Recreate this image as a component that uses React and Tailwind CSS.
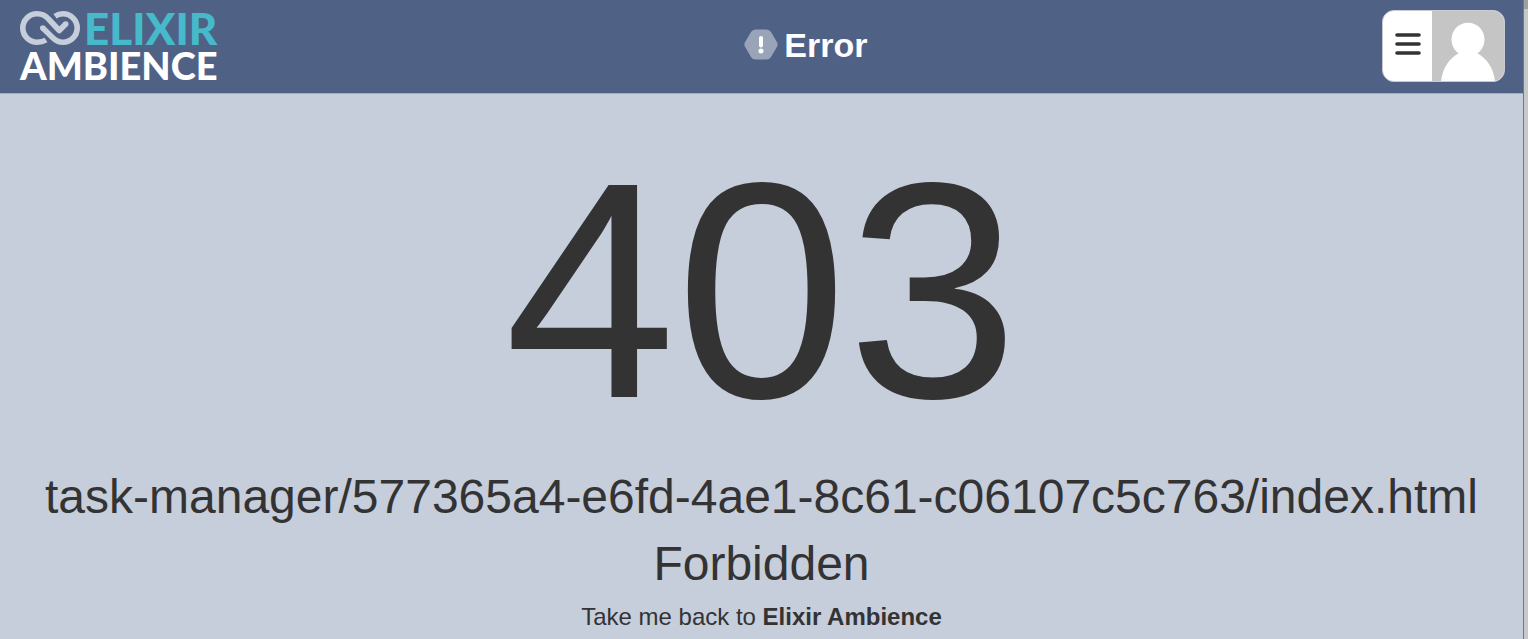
function KnotMark() {
  return (
    <svg viewBox="0 0 60 34" className="h-[34px] w-[60px]" fill="none" stroke="#c6cddb" strokeWidth="5.600" strokeLinejoin="round" aria-hidden="true">
      <path d="M26 29 C23 30.900 19.500 31.200 17 31.200 A14.200 14.200 0 0 1 17 2.800 C22 2.800 25.500 4.500 28.500 8 L39.300 19.500 L45.700 13" />
      <path d="M45.700 13 L45.700 13" strokeLinecap="round" />
      <path d="M22.800 17 L32.500 26.500 C35.500 29.500 39 31.200 43 31.200 A14.200 14.200 0 0 0 43 2.800 C40 2.800 37.500 3.500 35 5.200" />
      <path d="M22.800 17 L22.800 17" strokeLinecap="round" />
    </svg>
  );
}

function AlertHexagon() {
  return (
    <svg viewBox="0 0 34 32" className="h-8 w-[34px]" aria-hidden="true">
      <path d="M11.500 0.500 H22.500 Q25.500 0.500 27 3.100 L33 13.300 Q34.200 15.500 33 17.700 L27 27.900 Q25.500 30.500 22.500 30.500 H11.500 Q8.500 30.500 7 27.900 L1 17.700 Q-0.200 15.500 1 13.300 L7 3.100 Q8.500 0.500 11.500 0.500 Z" fill="#99a4b9" />
      <path d="M17 9 V16.500" stroke="#fff" strokeWidth="4" strokeLinecap="round" />
      <circle cx="17" cy="22" r="2.500" fill="#fff" />
    </svg>
  );
}

function Header() {
  return (
    <header className="flex items-start border-b border-[#a9acb6] bg-[#506186] pt-[10px] pr-[18px] pb-[11px] pl-5">
      <a href="#home" className="flex h-[72px] flex-col font-[Lato,sans-serif] font-black">
        <span className="flex h-9 items-center gap-1">
          <KnotMark />
          <span className="text-[44px] leading-9 text-[#46b9ca]">ELIXIR</span>
        </span>
        <span className="text-[38px] leading-[38px] text-white">AMBIENCE</span>
      </a>
      <h1 className="flex h-[70px] flex-1 items-center justify-center gap-1.5 pl-3 text-[34px] font-bold text-white">
        <AlertHexagon />
        Error
      </h1>
      <div className="flex h-[72px] overflow-hidden rounded-xl border border-[#c9cbd0] bg-white">
        <button type="button" aria-label="Menu" className="flex w-[49px] items-center justify-center">
          <svg viewBox="0 0 26 24" className="mb-1 h-6 w-[26px]" stroke="#333" strokeWidth="3.600" strokeLinecap="round" aria-hidden="true">
            <path d="M2 3 H24 M2 12 H24 M2 21 H24" />
          </svg>
        </button>
        <button type="button" aria-label="Account" className="w-[72px] bg-[#c5c5c5]">
          <svg viewBox="0 0 72 70" className="h-[70px] w-[72px]" fill="#fff" aria-hidden="true">
            <ellipse cx="36" cy="28.500" rx="16.500" ry="16.800" />
            <path d="M9 71 C10 58 17 47 28 41.500 H44 C55 47 62 58 63 71 Z" />
          </svg>
        </button>
      </div>
    </header>
  );
}

export default function App() {
  return (
    <div className="flex min-h-screen bg-[#c6cddb] font-['Liberation_Sans',Arial,sans-serif] text-[#333]">
      <div className="min-w-0 flex-1">
        <Header />
        <main className="flex flex-col items-center text-center">
          <p className="pt-[23px] text-[308px] leading-[346px]">403</p>
          <h2 className="text-5xl leading-[67px]">
            task-manager/577365a4-e6fd-4ae1-8c61-c06107c5c763/index.html
            <br />
            Forbidden
          </h2>
          <p className="text-2xl leading-10">
            Take me back to <a href="#home" className="font-bold">Elixir Ambience</a>
          </p>
        </main>
      </div>
      <div className="w-[5px] border-l border-[#777] bg-[#c8c8c8]" aria-hidden="true">
        <div className="h-[9px] bg-[#a0a0a0]" />
      </div>
    </div>
  );
}
